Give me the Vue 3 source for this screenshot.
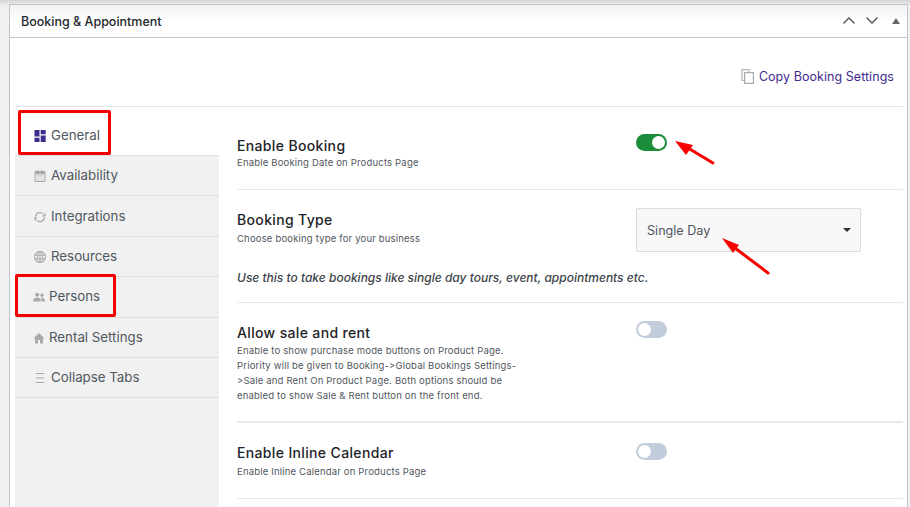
<script setup>
const tabs = [
  { name: 'General', icon: 'grid', active: true },
  { name: 'Availability', icon: 'cal' },
  { name: 'Integrations', icon: 'sync' },
  { name: 'Resources', icon: 'globe' },
  { name: 'Persons', icon: 'people', tight: true },
  { name: 'Rental Settings', icon: 'home', tight: true },
  { name: 'Collapse Tabs', icon: 'menu' }
]
</script>

<template>
  <div class="page">
    <div class="panel">
      <header class="head">
        <h2>Booking &amp; Appointment</h2>
        <div class="head-tools">
          <svg width="14" height="9" viewBox="0 0 14 9"><path d="M1.5 7.500 7 2l5.500 5.500" fill="none" stroke="#646970" stroke-width="1.600"/></svg>
          <svg width="14" height="9" viewBox="0 0 14 9"><path d="M1.5 1.500 7 7l5.500-5.500" fill="none" stroke="#646970" stroke-width="1.600"/></svg>
          <svg width="8" height="6" viewBox="0 0 8 6"><path d="M4 0 8 6H0z" fill="#646970"/></svg>
        </div>
      </header>
      <div class="inner">
        <div class="copy-row">
          <svg width="13" height="15" viewBox="0 0 13 15"><path d="M8 3V.7H1v10.600h2.500" fill="none" stroke="#b4b5b8" stroke-width="1.200"/><rect x="3.600" y="3.600" width="8.800" height="10.800" fill="#fff" stroke="#a7aaad" stroke-width="1.200"/></svg>
          <a class="copy">Copy Booking Settings</a>
        </div>
        <div class="columns">
          <nav class="side">
            <div v-for="t in tabs" :key="t.name" class="tab" :class="{ active: t.active, tight: t.tight }">
              <svg v-if="t.icon === 'grid'" class="ic" viewBox="0 0 12 12"><path d="M.5 0h5v6.500h-5zM.5 7.800h5V12h-5zM6.700 0h5v4.300h-5zM6.700 5.500h5V12h-5z" fill="#3f2c8f"/></svg>
              <svg v-else-if="t.icon === 'cal'" class="ic" viewBox="0 0 12 13"><rect x=".6" y="1.600" width="10.800" height="10.800" rx="1" fill="#e6e6e7" stroke="#a7aaad" stroke-width="1.100"/><path d="M.6 1.600h10.800v2.900H.6zM3 0h1.200v2H3zM7.800 0H9v2H7.800z" fill="#a7aaad"/><path d="M3 6.200h6" stroke="#c3c4c7" stroke-dasharray="1.500 1"/></svg>
              <svg v-else-if="t.icon === 'sync'" class="ic" viewBox="0 0 12 12"><path d="M1.500 5.800A4.500 4.500 0 0 1 9.300 3M10.500 6.400a4.500 4.500 0 0 1-7.800 2.800" fill="none" stroke="#a7aaad" stroke-width="1.200"/><path d="M11.500 2v3.400H8zM0 6.600h3.500L.8 10z" fill="#a7aaad"/></svg>
              <svg v-else-if="t.icon === 'globe'" class="ic" viewBox="0 0 12 12"><circle cx="6" cy="6" r="5.400" fill="none" stroke="#a7aaad" stroke-width="1.100"/><ellipse cx="6" cy="6" rx="2.400" ry="5.400" fill="none" stroke="#a7aaad" stroke-width=".9"/><path d="M.7 4.200h10.600M.7 7.800h10.600M6 .6v10.800" stroke="#a7aaad" stroke-width=".9"/></svg>
              <svg v-else-if="t.icon === 'people'" class="ic" viewBox="0 0 12 12"><circle cx="4.200" cy="3.800" r="2" fill="#a7aaad"/><circle cx="9" cy="4.200" r="1.700" fill="#a7aaad"/><path d="M0 10.500c0-2.600 1.700-4 4.200-4s3.800 1.400 3.800 4zM8.800 10.500c0-1.500-.3-2.700-1-3.600 2.600-.7 4.200.9 4.200 3.600z" fill="#a7aaad"/></svg>
              <svg v-else-if="t.icon === 'home'" class="ic" viewBox="0 0 12 12"><path d="M6 1 .3 6.500H2V11.500h3V8h2v3.500h3V6.500h1.700z" fill="#a7aaad"/></svg>
              <svg v-else class="ic" viewBox="0 0 12 12"><path d="M2 1.500h8M2 6h8M2 10.500h8" stroke="#a7aaad" stroke-width="1.100"/></svg>
              <span>{{ t.name }}</span>
            </div>
            <div class="mark mark-general"></div>
            <div class="mark mark-persons"></div>
          </nav>
          <main class="content">
            <section class="row row-enable">
              <div class="text">
                <h3>Enable Booking</h3>
                <p>Enable Booking Date on Products Page</p>
              </div>
              <span class="switch on"></span>
            </section>
            <section class="row row-type">
              <div class="type-top">
                <div class="text">
                  <h3>Booking Type</h3>
                  <p>Choose booking type for your business</p>
                </div>
                <div class="select">
                  <span>Single Day</span>
                  <i class="caret"></i>
                </div>
              </div>
              <em class="hint">Use this to take bookings like single day tours, event, appointments etc.</em>
            </section>
            <section class="row row-sale">
              <div class="text">
                <h3>Allow sale and rent</h3>
                <p>Enable to show purchase mode buttons on Product Page. Priority will be given to Booking-&gt;Global Bookings Settings-&gt;Sale and Rent On Product Page. Both options should be enabled to show Sale &amp; Rent button on the front end.</p>
              </div>
              <span class="switch"></span>
            </section>
            <section class="row row-inline">
              <div class="text">
                <h3>Enable Inline Calendar</h3>
                <p>Enable Inline Calendar on Products Page</p>
              </div>
              <span class="switch"></span>
            </section>
          </main>
        </div>
      </div>
    </div>
    <svg class="arrow arrow-one" width="44" height="30" viewBox="0 0 44 30"><path d="M38 25 13 10" stroke="#f60000" stroke-width="3" stroke-linecap="round"/><path d="M0 3 18 7 11 17z" fill="#f60000"/></svg>
    <svg class="arrow arrow-two" width="52" height="40" viewBox="0 0 52 40"><path d="M46 36 13 11" stroke="#f60000" stroke-width="3" stroke-linecap="round"/><path d="M0 1 17 8 11 16z" fill="#f60000"/></svg>
  </div>
</template>

<style>
html, body { margin: 0; background: #f0f0f1; }
</style>

<style scoped>
.page {
  position: relative;
  width: 910px;
  height: 507px;
  overflow: hidden;
  background: linear-gradient(#d2d3d5 0, #e6e7e8 4px, #f0f0f1 5px);
  font-family: Inter, "Liberation Sans", sans-serif;
  box-sizing: border-box;
  padding: 4px 2px 0 9px;
}
.panel {
  height: 540px;
  border: 1px solid #c3c4c7;
  background: #fff;
  box-sizing: border-box;
}
.head {
  height: 33px;
  box-sizing: border-box;
  border-bottom: 1px solid #c3c4c7;
  background: linear-gradient(#f1f1f2, #fff 16px);
  display: flex;
  align-items: center;
  justify-content: space-between;
  padding: 0 7px 0 11px;
}
h2 {
  margin: 0;
  font-size: 12.500px;
  font-weight: 500;
  color: #23282d;
}
.head-tools { display: flex; align-items: center; gap: 9px; margin-top: -1px; }
.head-tools svg:last-child { margin-left: 4px; }
.inner { padding: 0 4px 0 5px; }
.copy-row {
  height: 69px;
  box-sizing: border-box;
  border-bottom: 1px solid #e2e3e5;
  display: flex;
  align-items: center;
  justify-content: flex-end;
  gap: 5px;
  padding: 9px 9px 0 0;
}
.copy { font-size: 12.500px; color: #3f2c8f; letter-spacing: .05px; }
.columns { display: flex; }
.side {
  position: relative;
  width: 204px;
  min-height: 440px;
  background: #f1f1f1;
  flex: none;
}
.tab {
  height: 40.400px;
  box-sizing: border-box;
  border-bottom: 1px solid #dfdfdf;
  display: flex;
  align-items: center;
  gap: 5px;
  padding-left: 19px;
  padding-bottom: 1px;
  font-size: 13.300px;
  color: #50575e;
}
.tab.tight { gap: 4px; padding-left: 18px; }
.tab.active { height: 49px; background: #fff; padding-top: 7px; padding-bottom: 0; }
.ic { width: 12px; height: 12px; flex: none; margin-top: 2px; }
.mark { position: absolute; border: 3px solid #f50000; border-radius: 2px; box-sizing: border-box; }
.mark-general { left: 3px; top: 3px; width: 93px; height: 45px; }
.mark-persons { left: 0; top: 167px; width: 101px; height: 43px; }
.content { flex: 1; padding-left: 18px; min-width: 0; }
.row { border-bottom: 1px solid #e8e8ea; position: relative; box-sizing: border-box; }
.row-enable { height: 83px; padding-top: 30px; }
.row-enable p { margin-top: 1px; }
.row-type { height: 113px; padding-top: 18px; }
.row-sale { height: 120px; padding-top: 21px; border-bottom-width: 2px; }
.row-sale p { margin-top: 2px; }
.row-inline { height: 76px; padding-top: 21px; }
.text { width: 285px; }
h3 {
  margin: 0;
  font-size: 14px;
  line-height: 17px;
  font-weight: 500;
  letter-spacing: .35px;
  color: #1d2327;
}
p {
  margin: 3px 0 0;
  font-size: 9.500px;
  line-height: 15px;
  color: #50575e;
  letter-spacing: .18px;
}
.switch {
  position: absolute;
  left: 399px;
  top: 27px;
  width: 31px;
  height: 17px;
  border-radius: 9px;
  background: #c2cddc;
}
.switch::after {
  content: "";
  position: absolute;
  left: 2px;
  top: 2px;
  width: 13px;
  height: 13px;
  border-radius: 50%;
  background: #fff;
}
.switch.on { background: #1b8c3a; }
.switch.on::after { left: 16px; }
.row-sale .switch { top: 18px; }
.row-inline .switch { top: 20px; }
.type-top { display: flex; justify-content: space-between; padding-right: 42px; }
.type-top .text { padding-top: 3px; }
.select {
  width: 225px;
  height: 44px;
  margin-left: -1px;
  box-sizing: border-box;
  border: 1px solid #dcdcde;
  border-radius: 2px;
  background: #f8f8f8;
  display: flex;
  align-items: center;
  justify-content: space-between;
  padding: 0 9px 0 10px;
  font-size: 12.600px;
  color: #50575e;
}
.caret {
  width: 0;
  height: 0;
  border-left: 4px solid transparent;
  border-right: 4px solid transparent;
  border-top: 4px solid #2c3338;
}
.hint {
  display: block;
  margin-top: 18px;
  font-size: 12px;
  line-height: 16px;
  font-weight: 500;
  color: #3c434a;
}
.arrow { position: absolute; }
.arrow-one { left: 675px; top: 138px; }
.arrow-two { left: 722px; top: 237px; }
</style>
